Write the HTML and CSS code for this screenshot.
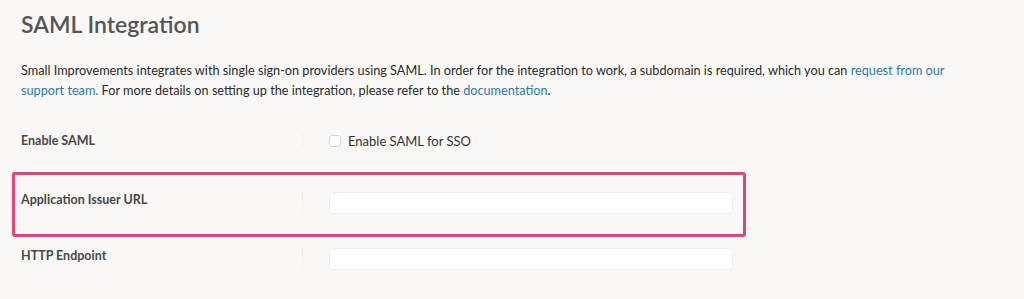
FILE: index.html
```html
<!DOCTYPE html>
<html lang="en">
<head>
  <meta charset="UTF-8">
  <meta name="viewport" content="width=device-width, initial-scale=1.0">
  <title>SAML Integration</title>
  <link rel="stylesheet" href="styles.css">
</head>
<body>

  <div class="page">
    <h1>SAML Integration</h1>

    <p class="intro">
      Small Improvements integrates with single sign-on providers using SAML. In order for the integration to work, a subdomain is required, which you can <a href="#">request from our</a><br>
      <a href="#">support team.</a> For more details on setting up the integration, please refer to the <a href="#">documentation</a>.
    </p>

    <div class="field-row first">
      <label class="field-label">Enable SAML</label>
      <div class="field-sep"></div>
      <div class="field-control">
        <label class="check">
          <input type="checkbox">
          <span>Enable SAML for SSO</span>
        </label>
      </div>
    </div>

    <div class="highlight">
      <div class="field-row">
        <label class="field-label">Application Issuer URL</label>
        <div class="field-sep"></div>
        <div class="field-control">
          <input type="text" class="text-input">
        </div>
      </div>
    </div>

    <div class="field-row last">
      <label class="field-label">HTTP Endpoint</label>
      <div class="field-sep"></div>
      <div class="field-control">
        <input type="text" class="text-input">
      </div>
    </div>
  </div>

</body>
</html>
```

FILE: styles.css
```css
* {
  box-sizing: border-box;
  margin: 0;
  padding: 0;
}

body {
  background-color: #f9f8f7;
  color: #333;
  font-family: Lato, "Noto Sans", sans-serif;
}

.page {
  padding: 10px 21px 0 21px;
}

h1 {
  font-size: 23px;
  line-height: 28px;
  font-weight: 600;
  color: #555;
}

.intro {
  margin-top: 22px;
  width: 980px;
  font-size: 12.7px;
  line-height: 20px;
  color: #2a2a2a;
}

.intro a {
  color: #1f7bb6;
  text-decoration: none;
}

.field-row {
  display: flex;
  align-items: flex-start;
}

.field-row.first {
  margin-top: 33px;
}

.field-row.last {
  margin-top: 11px;
}

.field-label {
  width: 281px;
  font-size: 12.5px;
  line-height: 16px;
  font-weight: 700;
  color: #484848;
}

.field-sep {
  align-self: stretch;
  border-left: 1px dotted #ebe9e7;
}

.field-control {
  padding-left: 26px;
}

.check {
  display: flex;
  align-items: center;
  gap: 7px;
  font-size: 13px;
  line-height: 16px;
  color: #333;
}

.check input {
  appearance: none;
  width: 12px;
  height: 12px;
  border: 1px solid #d6d4d2;
  border-radius: 3px;
  background-color: #fff;
}

.text-input {
  display: block;
  width: 404px;
  height: 22px;
  border: 1px solid #eeecea;
  border-radius: 4px;
  background-color: #fff;
}

.highlight {
  margin: 23px 0 0 -9px;
  width: 734px;
  padding: 17px 10px 20px 6px;
  border: 3px solid #e8417a;
  border-radius: 3px;
}
```
